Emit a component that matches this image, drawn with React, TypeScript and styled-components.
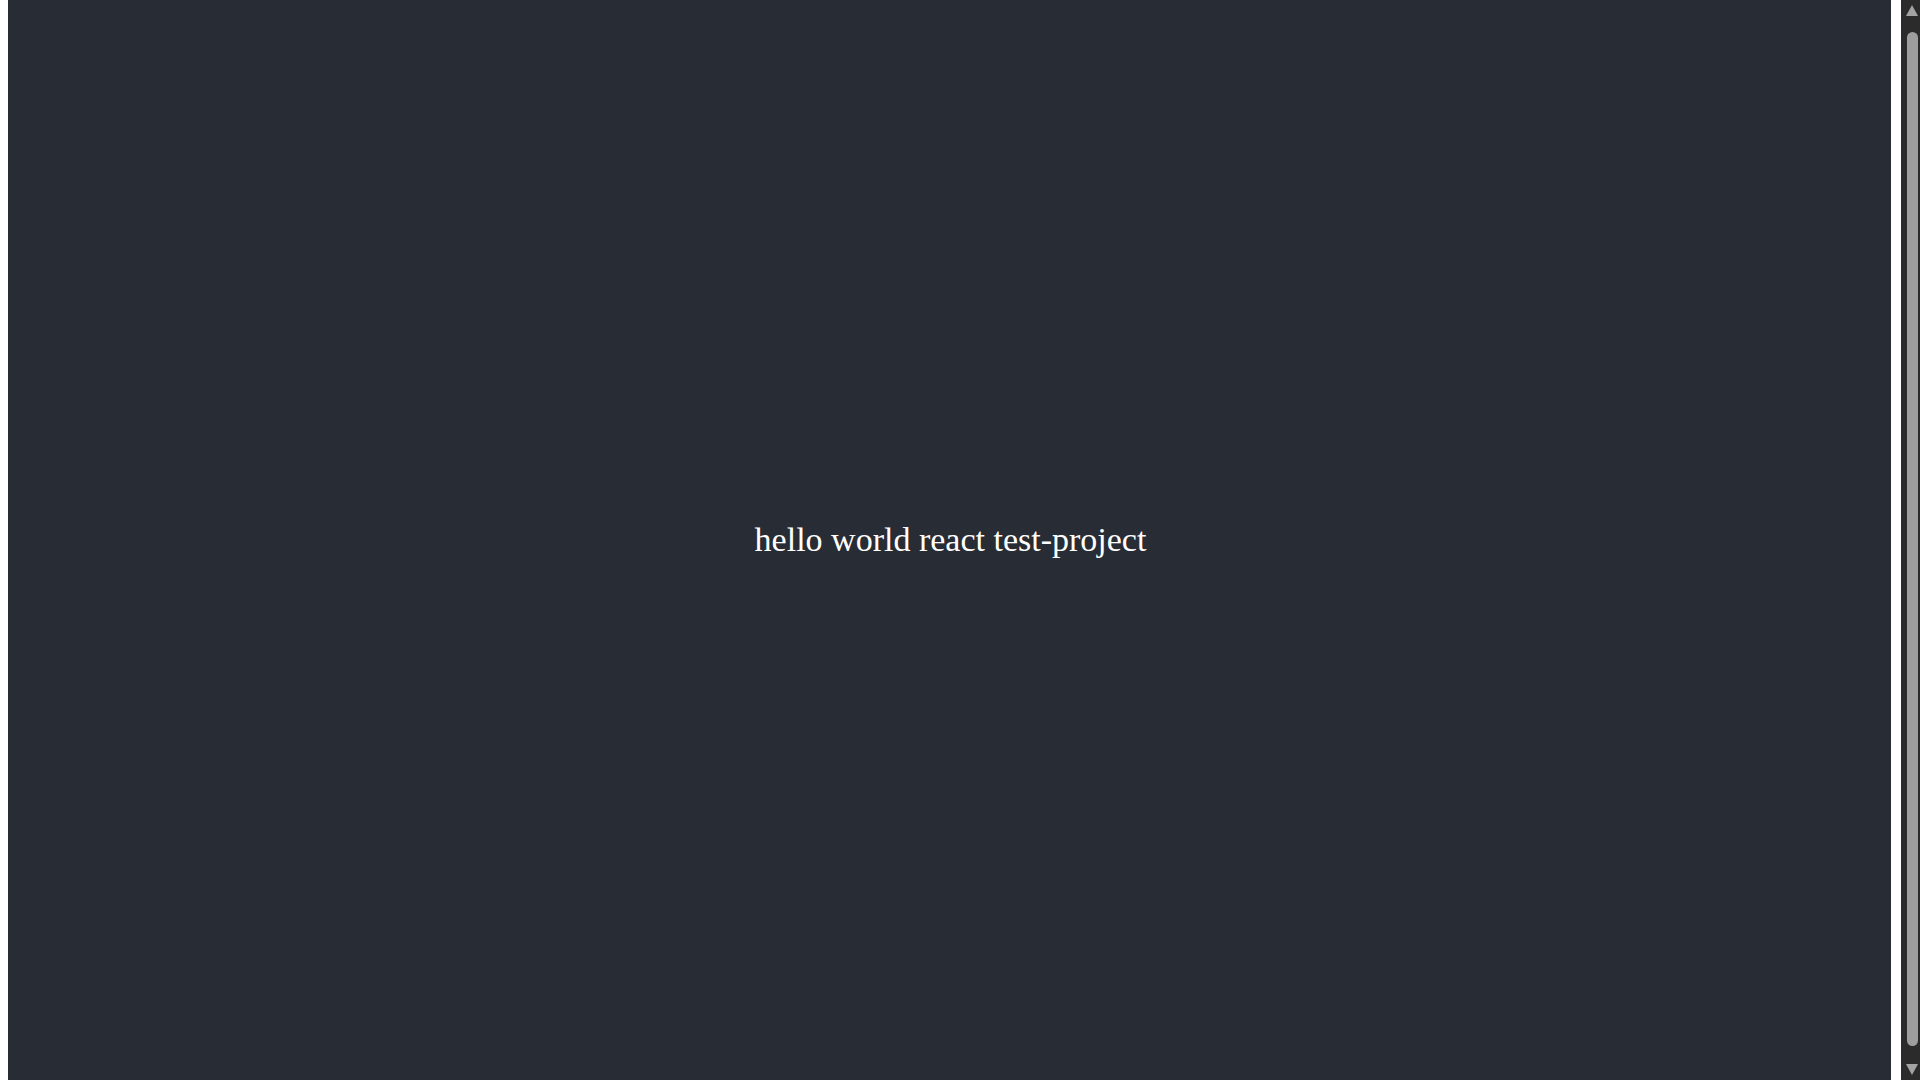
import React from "react";
import styled, { createGlobalStyle } from "styled-components";

const GlobalStyle = createGlobalStyle`
  html {
    background: #ffffff;
  }
  body {
    margin: 0 29px 0 8px;
    font-family: "Liberation Serif", "Times New Roman", serif;
  }
`;

const Page = styled.div`
  text-align: center;
`;

const Header = styled.header`
  background-color: #282c34;
  min-height: 100vh;
  display: flex;
  flex-direction: column;
  align-items: center;
  justify-content: center;
  font-size: 34px;
  color: #ffffff;
`;

const Title = styled.p`
  margin: 0 0 0 2px;
`;

/* imitation of the browser's dark scrollbar that sits over the page edge */
const ScrollBar = styled.div`
  position: fixed;
  top: 0;
  right: 0;
  width: 19px;
  height: 100vh;
  background: #2b2b2b;
  display: flex;
  flex-direction: column;
  align-items: center;
  padding: 5px 0 5px 3px;
  box-sizing: border-box;
`;

const Arrow = styled.svg`
  display: block;
  width: 12px;
  height: 11px;
  flex: none;
`;

const Thumb = styled.div`
  flex: 1;
  width: 11px;
  margin: 16px 0 18px;
  background: #9e9e9e;
  border-radius: 6px;
`;

export default function App() {
  return (
    <Page>
      <GlobalStyle />
      <Header>
        <Title>hello world react test-project</Title>
      </Header>
      <ScrollBar>
        <Arrow viewBox="0 0 12 11">
          <polygon points="6,0 12,11 0,11" fill="#a3a3a3" />
        </Arrow>
        <Thumb />
        <Arrow viewBox="0 0 12 11">
          <polygon points="0,0 12,0 6,11" fill="#a3a3a3" />
        </Arrow>
      </ScrollBar>
    </Page>
  );
}
